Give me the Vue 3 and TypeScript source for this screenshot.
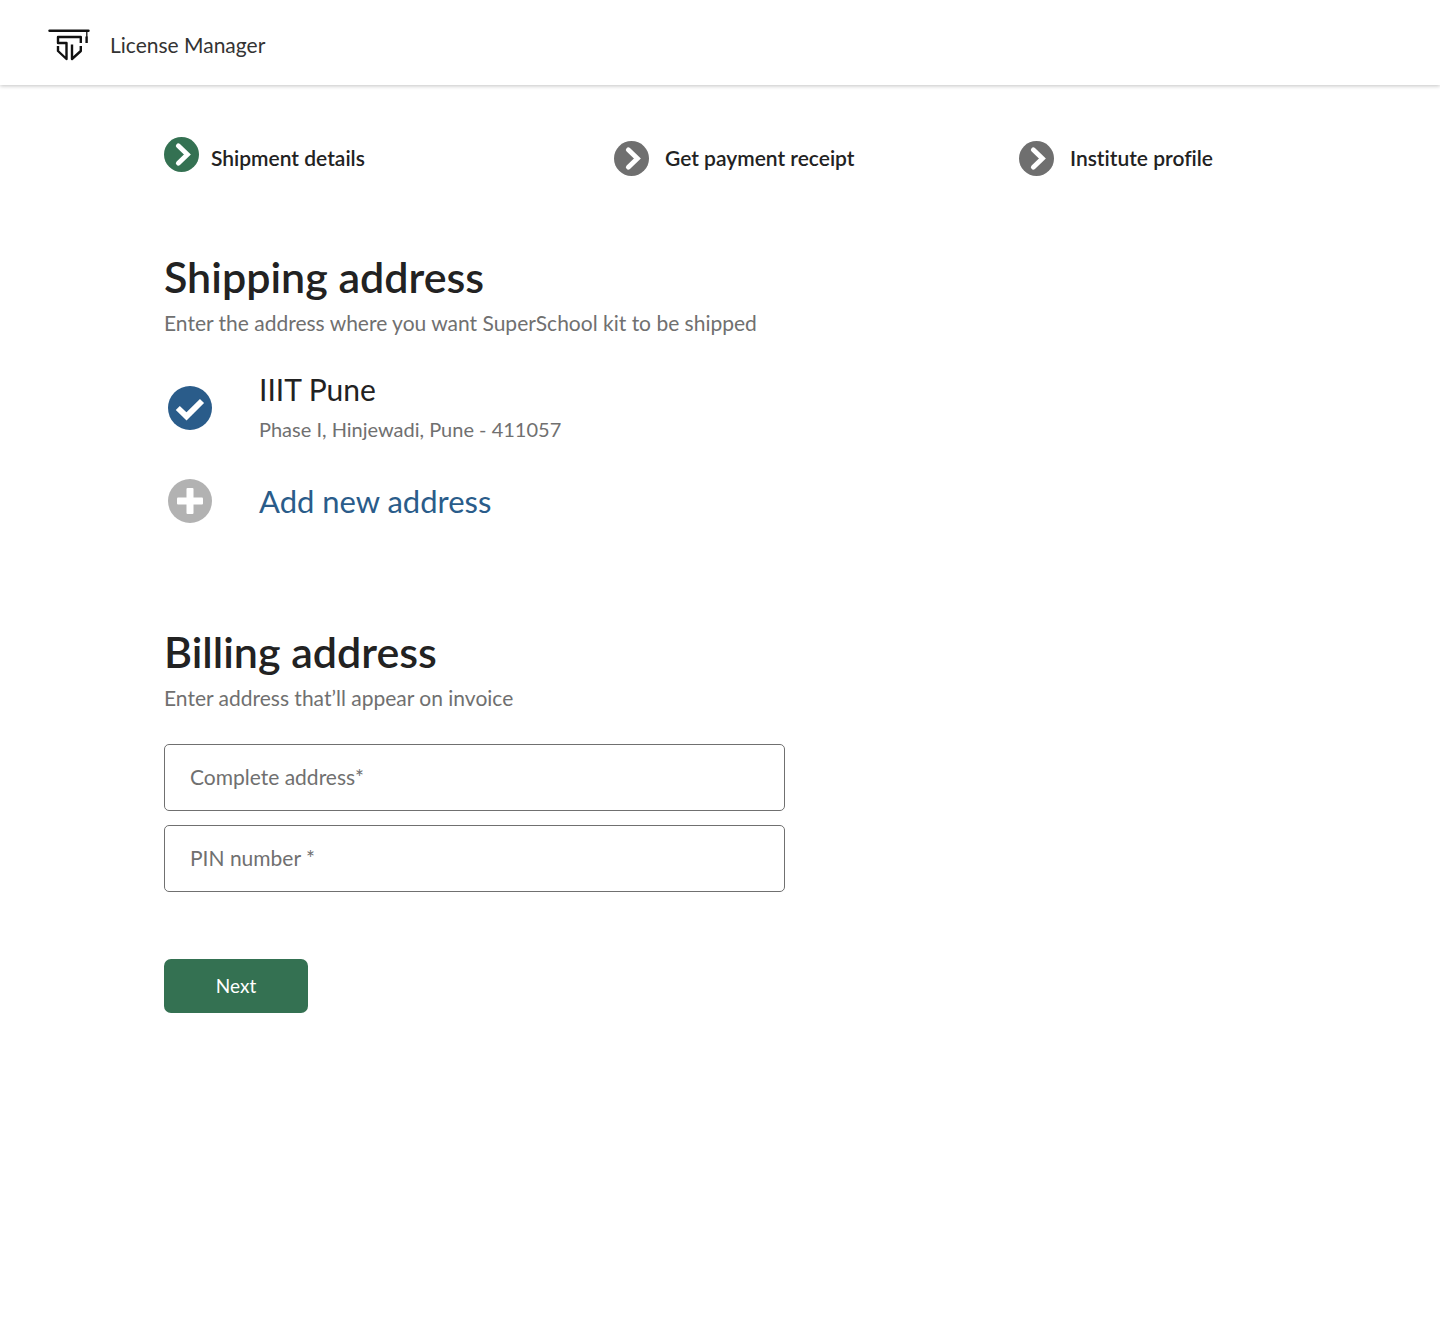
<script setup lang="ts">
import { ref } from 'vue'

interface Step {
  label: string
  active: boolean
}

const steps: Step[] = [
  { label: 'Shipment details', active: true },
  { label: 'Get payment receipt', active: false },
  { label: 'Institute profile', active: false },
]

const address = ref('')
const pin = ref('')
</script>

<template>
  <div class="page">
    <header class="topbar">
      <svg class="logo" viewBox="0 0 42 32" aria-hidden="true">
        <g fill="none" stroke="#111" stroke-width="2.400" stroke-linejoin="round">
          <path d="M1.500 1.800H40.500" stroke-width="2.400" stroke-linecap="round" />
          <path d="M38.800 2V8" stroke-width="1.300" />
          <path d="M38.600 7.500V14" />
          <path d="M32.800 14V8H10V14H18.500V30L10 22V17" />
          <path d="M24 15.500V30L32.800 22V17" />
        </g>
      </svg>
      <span class="brand">License Manager</span>
    </header>

    <main class="content">
      <ol class="steps">
        <li v-for="step in steps" :key="step.label" class="step" :class="{ active: step.active }">
          <svg class="step-icon" viewBox="0 0 35 35" aria-hidden="true">
            <circle cx="17.500" cy="17.500" r="17.500" fill="currentColor" />
            <path d="M14.300 8.800L23.400 17.500L14.300 26.200" fill="none" stroke="#fff" stroke-width="4.800" stroke-linecap="round" />
          </svg>
          <span class="step-label">{{ step.label }}</span>
        </li>
      </ol>

      <section class="shipping">
        <h1 class="title">Shipping address</h1>
        <p class="hint">Enter the address where you want SuperSchool kit to be shipped</p>

        <div class="option saved">
          <svg class="option-icon" viewBox="0 0 44 44" aria-hidden="true">
            <circle cx="22" cy="22" r="22" fill="#2a5c8a" />
            <path d="M9.800 22L18.500 30.400L34 15" fill="none" stroke="#fff" stroke-width="5.800" stroke-linejoin="miter" />
          </svg>
          <div class="place-text">
            <h2 class="place">IIIT Pune</h2>
            <p class="place-detail">Phase I, Hinjewadi, Pune - 411057</p>
          </div>
        </div>

        <button type="button" class="option add">
          <svg class="option-icon" viewBox="0 0 44 44" aria-hidden="true">
            <circle cx="22" cy="22" r="22" fill="#b2b2b2" />
            <rect x="18.500" y="9" width="7" height="26" rx="1" fill="#fff" />
            <rect x="9" y="18.500" width="26" height="7" rx="1" fill="#fff" />
          </svg>
          <span>Add new address</span>
        </button>
      </section>

      <form class="billing" @submit.prevent>
        <h1 class="title">Billing address</h1>
        <p class="hint">Enter address that’ll appear on invoice</p>
        <div class="fields">
          <input v-model="address" class="field" type="text" placeholder="Complete address*" aria-label="Complete address" />
          <input v-model="pin" class="field" type="text" placeholder="PIN number *" aria-label="PIN number" />
        </div>
        <button type="submit" class="next">Next</button>
      </form>
    </main>
  </div>
</template>

<style>
body {
  margin: 0;
  background: #fff;
}
</style>

<style scoped>
.page {
  min-height: 100vh;
  font-family: Lato, "Open Sans", sans-serif;
  font-variant-ligatures: none;
  font-size: 21px;
  color: #222;
}

.topbar {
  box-sizing: border-box;
  display: flex;
  align-items: center;
  gap: 20px;
  height: 85px;
  padding: 4px 48px 0;
  box-shadow: 0 1px 4px rgba(0, 0, 0, 0.24);
}

.logo {
  width: 42px;
  height: 32px;
}

.brand {
  line-height: 28px;
  color: #333;
}

.content {
  padding: 52px 164px;
}

.steps {
  display: grid;
  grid-template-columns: 450fr 405fr 257fr;
  margin: 0;
  padding: 0;
  list-style: none;
}

.step {
  display: flex;
  gap: 16px;
  padding-top: 4px;
  color: #6f6f6f;
}

.step.active {
  gap: 12px;
  padding-top: 0;
  color: #347152;
}

.step-icon {
  flex: none;
  width: 35px;
  height: 35px;
}

.step-label {
  font-weight: 600;
  line-height: 34px;
  color: #222;
}

.step.active .step-label {
  padding-top: 4px;
}

.shipping {
  margin-top: 71px;
}

.title {
  margin: 0;
  font-size: 43px;
  font-weight: 600;
  line-height: 60px;
}

.hint {
  margin: 0;
  line-height: 32px;
  color: #707070;
}

.option {
  display: flex;
  align-items: center;
  gap: 47px;
  padding: 0 4px;
}

.option-icon {
  flex: none;
  width: 44px;
  height: 44px;
}

.saved {
  margin-top: 28px;
}

.place-text {
  padding-bottom: 2px;
}

.place {
  margin: 0;
  font-size: 30px;
  font-weight: 400;
  line-height: 44px;
}

.place-detail {
  margin: 0;
  font-size: 20px;
  line-height: 36px;
  color: #707070;
}

.add {
  margin-top: 30px;
  border: 0;
  background: none;
  font: inherit;
  font-size: 31px;
  line-height: 44px;
  color: #2a5c8a;
  cursor: pointer;
}

.billing {
  margin-top: 99px;
}

.fields {
  display: flex;
  flex-direction: column;
  gap: 14px;
  max-width: 621px;
  margin-top: 30px;
}

.field {
  box-sizing: border-box;
  width: 100%;
  height: 67px;
  padding: 0 25px 2px;
  border: 1px solid #707070;
  border-radius: 5px;
  background: #fff;
  font: inherit;
  color: #222;
}

.field::placeholder {
  color: #707070;
  opacity: 1;
}

.next {
  width: 144px;
  height: 54px;
  margin-top: 67px;
  padding: 0 0 2px;
  border: 0;
  border-radius: 7px;
  background: #347152;
  font: inherit;
  font-size: 19px;
  color: #fff;
  cursor: pointer;
}
</style>
